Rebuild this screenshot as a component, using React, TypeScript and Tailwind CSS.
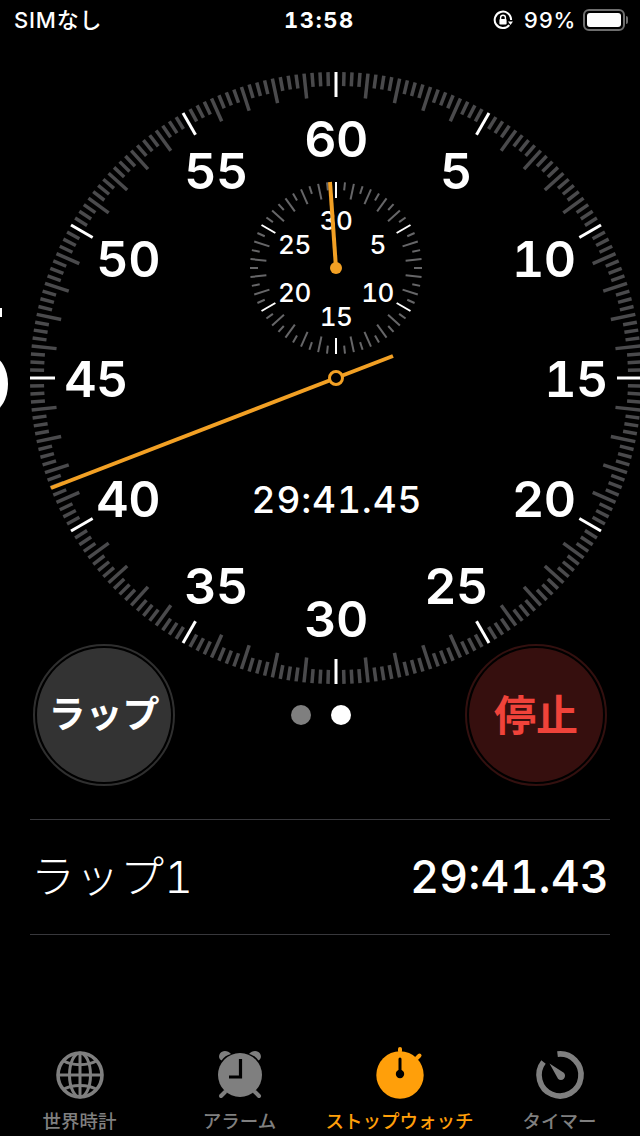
const FONT = "font-['Inter','Noto_Sans_CJK_JP',sans-serif]";
const CX = 336, CY = 378, SX = 336, SY = 268;
const ORANGE = "#f2a024";
const polar = (cx: number, cy: number, r: number, deg: number) => {
  const a = (deg * Math.PI) / 180;
  return [cx + r * Math.sin(a), cy - r * Math.cos(a)];
};

function Dial() {
  const ticks = Array.from({ length: 240 }, (_, i) => {
    const deg = i * 1.5;
    const major = i % 20 === 0;
    const medium = i % 4 === 0;
    const [x1, y1] = polar(CX, CY, 306, deg);
    const [x2, y2] = polar(CX, CY, major || medium ? 281 : 292, deg);
    return <line key={i} x1={x1} y1={y1} x2={x2} y2={y2} stroke={major ? "#fff" : "#4a4a4c"} strokeWidth={major ? 3 : 3.5} />;
  });
  const subTicks = Array.from({ length: 60 }, (_, i) => {
    const deg = i * 6;
    const major = i % 10 === 0;
    const medium = i % 2 === 0;
    const [x1, y1] = polar(SX, SY, 86, deg);
    const [x2, y2] = polar(SX, SY, major || medium ? 70 : 78, deg);
    return <line key={i} x1={x1} y1={y1} x2={x2} y2={y2} stroke={major ? "#fff" : "#666668"} strokeWidth={2} />;
  });
  const labels = [60, 5, 10, 15, 20, 25, 30, 35, 40, 45, 50, 55].map((n, i) => {
    const [x, y] = polar(CX, CY, 240, i * 30);
    return (
      <text key={n} x={x} y={y + 18.5} textAnchor="middle" fill="#fff" fontSize={50} fontWeight={600} letterSpacing={-0.5}>
        {n}
      </text>
    );
  });
  const subLabels = [30, 5, 10, 15, 20, 25].map((n, i) => {
    const [x, y] = polar(SX, SY, 48, i * 60);
    return (
      <text key={n} x={x} y={y + 10} textAnchor="middle" fill="#fff" fontSize={26} fontWeight={500} letterSpacing={-0.5}>
        {n}
      </text>
    );
  });
  return (
    <svg width={640} height={660} viewBox="0 40 640 660" className={`block tabular-nums ${FONT}`}>
      <rect x={0} y={308} width={2} height={9} fill="#fff" />
      <ellipse cx={-8} cy={384} rx={16} ry={27} fill="#fff" />
      {ticks}
      {subTicks}
      {labels}
      {subLabels}
      <text x={337} y={513} textAnchor="middle" fill="#fff" fontSize={37} fontWeight={500} letterSpacing={0.9}>
        29:41.45
      </text>
      <line x1={330} y1={182} x2={336} y2={268} stroke={ORANGE} strokeWidth={4} />
      <circle cx={336} cy={268} r={6} fill={ORANGE} />
      <line x1={51} y1={488} x2={393} y2={356} stroke={ORANGE} strokeWidth={4} />
      <circle cx={336} cy={378} r={6.5} fill="#000" stroke={ORANGE} strokeWidth={3} />
    </svg>
  );
}

function StatusBar() {
  return (
    <div className="relative flex h-[40px] items-center justify-between pl-[14px] pr-[12px] text-[22px] font-medium text-white">
      <span className="tracking-[0.8px]">SIMなし</span>
      <span className="absolute left-[284px] font-bold tabular-nums tracking-[1.6px]">13:58</span>
      <div className="flex items-center">
        <svg width={22} height={22} viewBox="0 0 22 22" className="mr-[10px]">
          <path d="M18.6 13.6A8.2 8.2 0 1 1 18.6 8.2" fill="none" stroke="#fff" strokeWidth={2} transform="rotate(20 11 11)" />
          <path d="M16 12.5h5l-2.5 3.4z" fill="#fff" />
          <path d="M8.6 10V8.6a2.4 2.4 0 0 1 4.8 0V10" fill="none" stroke="#fff" strokeWidth={1.4} />
          <rect x={7.4} y={10} width={7.2} height={5.4} rx={1} fill="#fff" />
        </svg>
        <span className="mr-[7px] text-[22px] tabular-nums tracking-[0.6px]">99%</span>
        <div className="h-[22px] w-[42px] rounded-[6px] border-2 border-[#6e6e6e] p-[2px]">
          <div className="h-full w-full rounded-[3px] bg-white" />
        </div>
        <div className="ml-[1px] h-[8px] w-[2px] rounded-r-[2px] bg-[#6e6e6e]" />
      </div>
    </div>
  );
}

function RoundButton({ label, ring, fill, color }: { label: string; ring: string; fill: string; color: string }) {
  return (
    <div className={`h-[142px] w-[142px] rounded-full border-2 p-[2px] ${ring}`}>
      <div className={`flex h-full w-full items-center justify-center rounded-full font-semibold ${fill} ${color}`}>
        {label}
      </div>
    </div>
  );
}

const GRAY = "#7f7f7f";

function GlobeIcon() {
  return (
    <svg width={60} height={60} viewBox="0 0 60 60" fill="none" stroke={GRAY} strokeWidth={3}>
      <circle cx={30} cy={30} r={22} strokeWidth={3.6} />
      <ellipse cx={30} cy={30} rx={10.5} ry={22} />
      <line x1={30} y1={8} x2={30} y2={52} />
      <line x1={8} y1={30} x2={52} y2={30} />
      <path d="M13 15.5C22 21 38 21 47 15.5" />
      <path d="M13 44.5C22 39 38 39 47 44.5" />
    </svg>
  );
}

function AlarmIcon() {
  return (
    <svg width={60} height={60} viewBox="0 0 60 60">
      <path d="M10 8.5c2-3.5 8-3.5 11 .5-4 1-7.200 3-9.500 6.500-2.500-1.500-3.200-4.500-1.500-7z" fill={GRAY} />
      <path d="M50 8.500c-2-3.500-8-3.500-11 .5 4 1 7.200 3 9.500 6.500 2.500-1.500 3.200-4.500 1.500-7z" fill={GRAY} />
      <line x1={15} y1={47} x2={11} y2={51} stroke={GRAY} strokeWidth={4} strokeLinecap="round" />
      <line x1={45} y1={47} x2={49} y2={51} stroke={GRAY} strokeWidth={4} strokeLinecap="round" />
      <circle cx={30} cy={30} r={22} fill={GRAY} />
      <path d="M30.500 14v18H19" fill="none" stroke="#000" strokeWidth={3.2} />
    </svg>
  );
}

function StopwatchIcon() {
  return (
    <svg width={60} height={60} viewBox="0 0 60 60">
      <rect x={28} y={2} width={4} height={6} rx={2} fill="#ff9f0a" />
      <line x1={47} y1={13} x2={49.5} y2={10.5} stroke="#ff9f0a" strokeWidth={4} strokeLinecap="round" />
      <circle cx={30} cy={30} r={23.7} fill="#ff9f0a" />
      <line x1={30} y1={14} x2={30} y2={28} stroke="#000" strokeWidth={3} strokeLinecap="round" />
      <circle cx={30} cy={29} r={4.2} fill="#000" />
    </svg>
  );
}

function TimerIcon() {
  return (
    <svg width={60} height={60} viewBox="0 0 60 60">
      <path d="M27.500 9.100A21 21 0 1 1 13.500 17" fill="none" stroke={GRAY} strokeWidth={5.6} />
      <path d="M19.500 18.500L33.800 27.800A3.800 3.800 0 0 1 28 33.700z" fill={GRAY} />
    </svg>
  );
}

function Tab({ icon, label, color }: { icon: React.ReactNode; label: string; color: string }) {
  return (
    <div className={`flex flex-col items-center pr-[1px] ${color}`}>
      {icon}
      <span className="mt-[5px] whitespace-nowrap text-[18.5px] leading-[22px] font-medium">{label}</span>
    </div>
  );
}

export default function App() {
  return (
    <div className={`flex h-[1136px] w-[640px] flex-col overflow-hidden bg-black ${FONT}`}>
      <StatusBar />
      <Dial />
      <div className="relative -mt-[56px] flex items-center justify-between px-[33px]">
        <div className="text-[37px]">
          <RoundButton label="ラップ" ring="border-[#2f2f2f]" fill="bg-[#333333]" color="text-white" />
        </div>
        <div className="ml-[2px] flex gap-[20px]">
          <div className="h-[20px] w-[20px] rounded-full bg-[#7f7f7f]" />
          <div className="h-[20px] w-[20px] rounded-full bg-white" />
        </div>
        <div className="text-[42px]">
          <RoundButton label="停止" ring="border-[#33100f]" fill="bg-[#360f0e]" color="text-[#f0433a]" />
        </div>
      </div>
      <div className="mx-[30px] mt-[33px] flex h-[116px] items-center justify-between border-y border-[#38383c] pl-[1px] pr-[1px] text-white">
        <span className="text-[44px] font-light tabular-nums tracking-[0.5px]">ラップ1</span>
        <span className="text-[45px] font-medium tabular-nums">29:41.43</span>
      </div>
      <div className="mt-auto grid h-[91px] grid-cols-4">
        <Tab icon={<GlobeIcon />} label="世界時計" color="text-[#7f7f7f]" />
        <Tab icon={<AlarmIcon />} label="アラーム" color="text-[#7f7f7f]" />
        <Tab icon={<StopwatchIcon />} label="ストップウォッチ" color="text-[#ff9f0a]" />
        <Tab icon={<TimerIcon />} label="タイマー" color="text-[#7f7f7f]" />
      </div>
    </div>
  );
}
